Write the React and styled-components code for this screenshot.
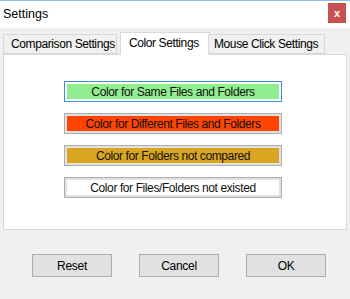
import styled, { createGlobalStyle } from "styled-components";

const GlobalStyle = createGlobalStyle`
  html, body {
    margin: 0;
    padding: 0;
    background: #f0f0f0;
  }
  body {
    font-family: "Liberation Sans", Arial, sans-serif;
    color: #000;
  }
`

const Window = styled.div`
  width: 350px;
  height: 299px;
  background: #f0f0f0;
  border-top: 1px solid #8cc2ee;
  box-sizing: border-box;
  display: flex;
  flex-direction: column;
  overflow: hidden;
`

const TitleBar = styled.div`
  height: 27px;
  background: #fff;
  display: flex;
  align-items: center;
  justify-content: space-between;
  padding: 0 4px 0 3px;
`

const Title = styled.span`
  font-size: 12.5px;
  margin-top: -2px;
`

const CloseButton = styled.div`
  width: 18px;
  height: 20px;
  margin-top: -3px;
  background: #c75050;
  color: #fff;
  font-size: 11px;
  font-weight: bold;
  display: flex;
  align-items: center;
  justify-content: center;
`

const Body = styled.div`
  padding: 4px 3px 0 3px;
`

const TabStrip = styled.div`
  display: flex;
  align-items: flex-end;
  height: 22px;
  position: relative;
  z-index: 1;
`

const Tab = styled.div`
  box-sizing: border-box;
  width: ${p => p.$width}px;
  height: ${p => (p.$active ? 23 : 20)}px;
  margin-left: ${p => p.$offset || 0}px;
  margin-bottom: ${p => (p.$active ? -1 : 0)}px;
  background: ${p => (p.$active ? "#fff" : "#f0f0f0")};
  border: 1px solid #d9d9d9;
  border-bottom: ${p => (p.$active ? "none" : "1px solid #d9d9d9")};
  font-size: 12px;
  letter-spacing: -0.4px;
  display: flex;
  align-items: ${p => (p.$active ? "flex-start" : "center")};
  padding-top: ${p => (p.$active ? 3 : 0)}px;
  padding-left: ${p => p.$pad}px;
  white-space: nowrap;
`

const Panel = styled.div`
  box-sizing: border-box;
  width: 344px;
  height: 176px;
  background: #fff;
  border: 1px solid #d9d9d9;
  padding: 26px 0 0 60px;
  display: flex;
  flex-direction: column;
  gap: 11px;
`

const ColorButton = styled.div`
  box-sizing: border-box;
  width: 218px;
  height: 21px;
  border: 1px solid ${p => (p.$focused ? "#3c8ddb" : "#adadad")};
  background: ${p => (p.$focused ? "#fff" : "#e1e1e1")};
  padding: 2px;
`

const ColorFill = styled.div`
  height: 100%;
  background: ${p => p.$color};
  display: flex;
  align-items: center;
  justify-content: center;
  font-size: 12px;
  letter-spacing: -0.4px;
  color: #111;
  white-space: nowrap;
`

const ButtonRow = styled.div`
  display: flex;
  gap: 27px;
  padding: 24px 0 0 32px;
`

const DialogButton = styled.button`
  box-sizing: border-box;
  width: 80px;
  height: 23px;
  background: #e1e1e1;
  border: 1px solid #adadad;
  font-family: "Liberation Sans", Arial, sans-serif;
  font-size: 12px;
  letter-spacing: -0.3px;
  color: #000;
  padding: 0;
`

const colors = [
  { label: "Color for Same Files and Folders", color: "#90ee90", focused: true },
  { label: "Color for Different Files and Folders", color: "#ff4500" },
  { label: "Color for Folders not compared", color: "#daa520" },
  { label: "Color for Files/Folders not existed", color: "#ffffff" },
]

export default function App() {
  return (
    <>
      <GlobalStyle />
      <Window>
        <TitleBar>
          <Title>Settings</Title>
          <CloseButton>x</CloseButton>
        </TitleBar>
        <Body>
          <TabStrip>
            <Tab $width={114} $pad={7}>Comparison Settings</Tab>
            <Tab $width={90} $pad={8} $offset={3} $active>Color Settings</Tab>
            <Tab $width={117} $pad={5} $offset={-2}>Mouse Click Settings</Tab>
          </TabStrip>
          <Panel>
            {colors.map(c => (
              <ColorButton key={c.label} $focused={c.focused}>
                <ColorFill $color={c.color}>{c.label}</ColorFill>
              </ColorButton>
            ))}
          </Panel>
        </Body>
        <ButtonRow>
          <DialogButton>Reset</DialogButton>
          <DialogButton>Cancel</DialogButton>
          <DialogButton>OK</DialogButton>
        </ButtonRow>
      </Window>
    </>
  )
}
